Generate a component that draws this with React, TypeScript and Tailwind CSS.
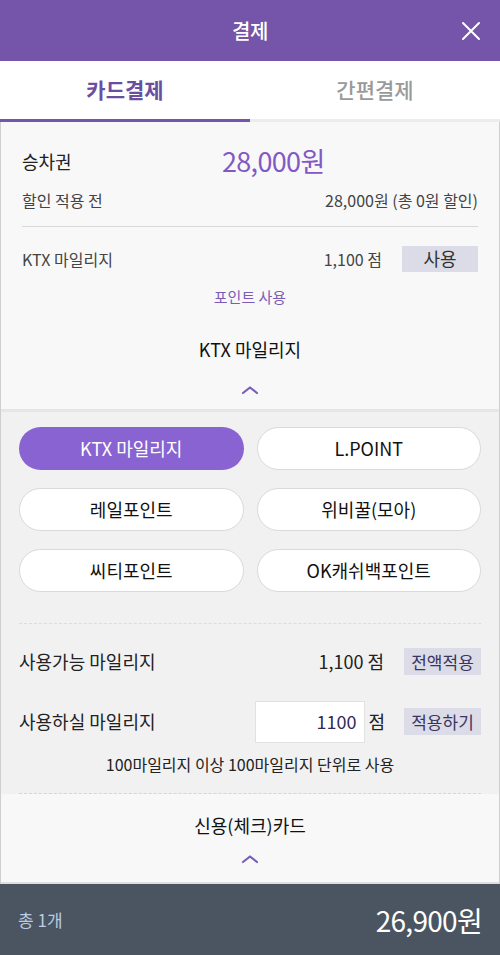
import React from 'react';

const font = { fontFamily: '"Noto Sans CJK KR", "Noto Sans", sans-serif' };

const points = ['KTX 마일리지', 'L.POINT', '레일포인트', '위비꿀(모아)', '씨티포인트', 'OK캐쉬백포인트'];

function ChevronUp() {
  return (
    <svg width="18" height="10" viewBox="0 0 18 10" fill="none">
      <path d="M2 8 L9 2.5 L16 8" stroke="#7a5cb8" strokeWidth="2.2" strokeLinecap="round" strokeLinejoin="round" />
    </svg>
  );
}

export default function App() {
  return (
    <div className="w-[500px] h-[955px] flex flex-col bg-[#f8f8f9] overflow-hidden" style={font}>
      {/* Header */}
      <div className="h-[61px] bg-[#7455a9] relative flex items-center justify-center shrink-0">
        <span className="text-white text-[20px] font-medium tracking-tight">결제</span>
        <svg className="absolute right-[19px] top-[21px]" width="20" height="20" viewBox="0 0 20 20">
          <path d="M2 2 L18 18 M18 2 L2 18" stroke="white" strokeWidth="2" strokeLinecap="round" />
        </svg>
      </div>

      {/* Tabs */}
      <div className="h-[61px] bg-white flex shrink-0">
        <div className="flex-1 flex items-center justify-center border-b-[3px] border-[#7455a9]">
          <span className="text-[21px] font-bold text-[#6a4fa0]">카드결제</span>
        </div>
        <div className="flex-1 flex items-center justify-center border-b-[3px] border-[#ececec]">
          <span className="text-[21px] font-medium text-[#9a9a9a]">간편결제</span>
        </div>
      </div>

      <div className="flex-1 flex flex-col border-x border-[#cfcfcf]">
        {/* Summary */}
        <div className="px-[21px] pt-[20px]">
          <div className="flex items-center h-[38px]">
            <span className="w-[200px] text-[18px] text-[#222]">승차권</span>
            <span className="text-[27px] text-[#8458c4] tracking-tight">28,000원</span>
          </div>
          <div className="flex items-center justify-between h-[40px] text-[16px] text-[#444]">
            <span>할인 적용 전</span>
            <span>28,000원 (총 0원 할인)</span>
          </div>
          <div className="h-px bg-[#d8d8d8] mt-[6px]" />
          <div className="flex items-center h-[63px] text-[16px] text-[#444]">
            <span className="flex-1">KTX 마일리지</span>
            <span className="mr-[20px]">1,100 점</span>
            <span className="w-[76px] h-[26px] bg-[#dcdce8] flex items-center justify-center text-[18px] text-[#333]">사용</span>
          </div>
          <div className="text-center text-[15px] text-[#7a5cb8] -mt-[4px]">포인트 사용</div>
          <div className="text-center text-[18px] text-[#111] mt-[27px]">KTX 마일리지</div>
          <div className="flex justify-center mt-[22px] h-[20px]">
            <ChevronUp />
          </div>
        </div>

        {/* Point selection */}
        <div className="mt-[4px] bg-[#f1f1f1] border-t-[3px] border-[#e6e6e6] px-[18px] pt-[15px]">
          <div className="grid grid-cols-2 gap-x-[13px] gap-y-[18px]">
            {points.map((p, i) => (
              <div
                key={p}
                className={
                  i === 0
                    ? 'h-[43px] rounded-full bg-[#8a63d2] flex items-center justify-center text-[18px] text-white'
                    : 'h-[43px] rounded-full bg-white border border-[#d9d9d9] flex items-center justify-center text-[18px] text-[#111]'
                }
              >
                {p}
              </div>
            ))}
          </div>
          <div className="mt-[31px] border-t border-dashed border-[#dcdcdc]" />
          <div className="flex items-center h-[76px] text-[18px] text-[#222]">
            <span className="flex-1">사용가능 마일리지</span>
            <span className="mr-[20px]">1,100 점</span>
            <span className="w-[77px] h-[27px] bg-[#dcdce8] flex items-center justify-center text-[17px] text-[#3a3560]">전액적용</span>
          </div>
          <div className="flex items-center h-[44px] text-[18px] text-[#222]">
            <span className="flex-1">사용하실 마일리지</span>
            <span className="w-[110px] h-[42px] bg-white border border-[#e2e2e2] flex items-center justify-end pr-[8px] text-[#2f2a55]">1100</span>
            <span className="ml-[3px] mr-[19px]">점</span>
            <span className="w-[77px] h-[27px] bg-[#dcdce8] flex items-center justify-center text-[17px] text-[#3a3560]">적용하기</span>
          </div>
          <div className="text-center text-[16px] text-[#222] mt-[8px] pb-[17px]">100마일리지 이상 100마일리지 단위로 사용</div>
          <div className="border-t border-dashed border-[#d6d6d6]" />
        </div>

        {/* Card section */}
        <div className="flex-1 bg-[#f8f8f8] flex flex-col items-center border-b-2 border-[#dedede]">
          <div className="text-[18px] text-[#111] mt-[18px]">신용(체크)카드</div>
          <div className="mt-[15px]">
            <ChevronUp />
          </div>
        </div>
      </div>

      {/* Footer */}
      <div className="h-[71px] bg-[#4a5561] flex items-center justify-between px-[18px] shrink-0">
        <span className="text-[17px] text-[#bccbe3]">총 1개</span>
        <span className="text-[28px] text-white tracking-tight">26,900원</span>
      </div>
    </div>
  );
}
